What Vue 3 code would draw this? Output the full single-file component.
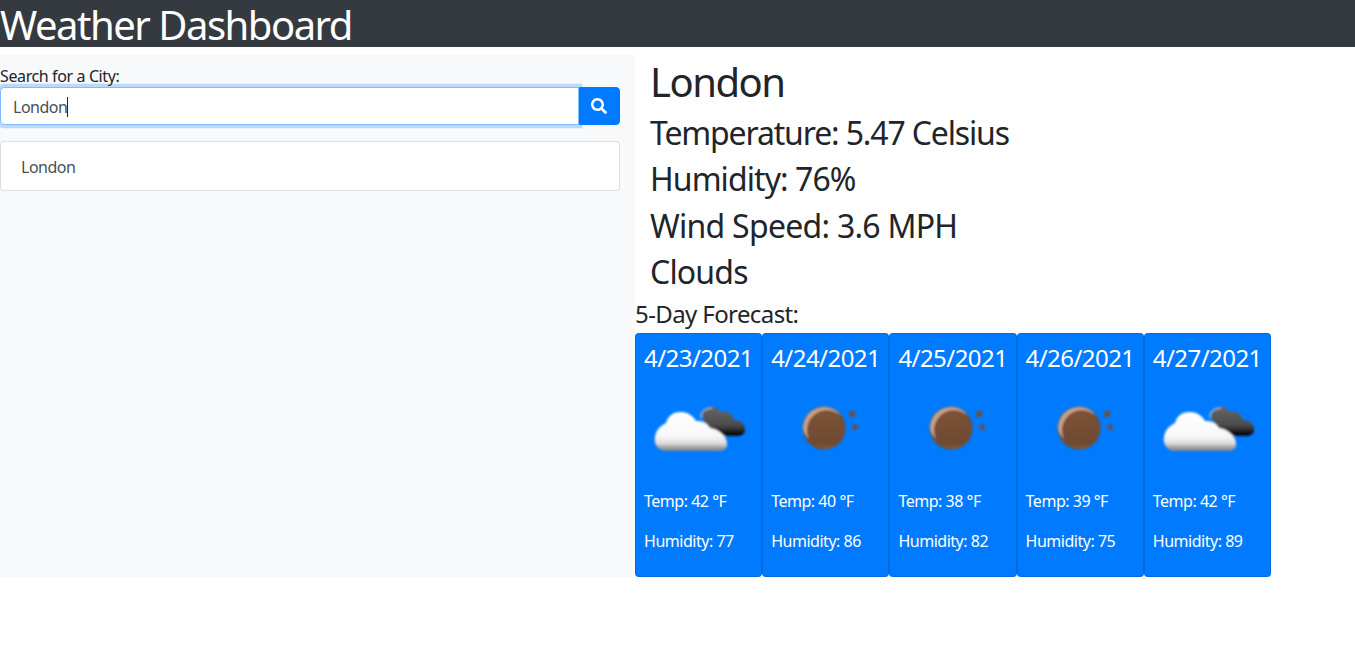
<script setup>
const days = [
  { date: '4/23/2021', icon: 'cloud', temp: 42, humidity: 77 },
  { date: '4/24/2021', icon: 'moon', temp: 40, humidity: 86 },
  { date: '4/25/2021', icon: 'moon', temp: 38, humidity: 82 },
  { date: '4/26/2021', icon: 'moon', temp: 39, humidity: 75 },
  { date: '4/27/2021', icon: 'cloud', temp: 42, humidity: 89 }
]
</script>

<template>
  <div class="page">
    <header class="topbar"><h1>Weather Dashboard</h1></header>
    <main class="layout">
      <section class="sidebar">
        <label class="search-label">Search for a City:</label>
        <div class="input-group">
          <div class="search-input"><span>London</span><i class="caret"></i></div>
          <button class="search-btn" aria-label="Search">
            <svg viewBox="0 0 512 512" width="16" height="16"><path fill="#fff" d="M505 442.7L405.3 343c-4.5-4.5-10.6-7-17-7H372c27.6-35.3 44-79.7 44-128C416 93.1 322.9 0 208 0S0 93.1 0 208s93.1 208 208 208c48.3 0 92.7-16.4 128-44v16.3c0 6.4 2.5 12.5 7 17l99.7 99.7c9.4 9.4 24.6 9.4 33.9 0l28.3-28.3c9.4-9.4 9.4-24.6.1-34zM208 336c-70.7 0-128-57.2-128-128 0-70.7 57.2-128 128-128 70.7 0 128 57.2 128 128 0 70.7-57.2 128-128 128z"/></svg>
          </button>
        </div>
        <ul class="history"><li>London</li></ul>
      </section>
      <section class="content">
        <div class="current">
          <h2>London</h2>
          <h3 class="temp">Temperature: 5.47 Celsius</h3>
          <h3 class="hum">Humidity: 76%</h3>
          <h3 class="wind">Wind Speed: 3.6 MPH</h3>
          <h3 class="sky">Clouds</h3>
        </div>
        <div class="forecast-title">5-Day Forecast:</div>
        <div class="forecast">
          <article v-for="d in days" :key="d.date" class="card">
            <div class="date">{{ d.date }}</div>
            <svg class="icon" viewBox="0 0 109 109">
              <defs>
                <linearGradient :id="'w' + d.date" gradientUnits="userSpaceOnUse" x1="0" y1="33" x2="0" y2="73">
                  <stop offset="0" stop-color="#fff" />
                  <stop offset=".6" stop-color="#f8f8f8" />
                  <stop offset=".78" stop-color="#dcdcdc" />
                  <stop offset=".9" stop-color="#9a9a9a" />
                  <stop offset="1" stop-color="#6f7f8f" />
                </linearGradient>
                <linearGradient :id="'k' + d.date" gradientUnits="userSpaceOnUse" x1="0" y1="28" x2="0" y2="58">
                  <stop offset="0" stop-color="#666" />
                  <stop offset=".6" stop-color="#4c4c4c" />
                  <stop offset=".88" stop-color="#111" />
                  <stop offset="1" stop-color="#000" />
                </linearGradient>
                <linearGradient :id="'m' + d.date" x1="0" y1="0" x2="0" y2="1">
                  <stop offset="0" stop-color="#7d5338" />
                  <stop offset=".85" stop-color="#6e4a32" />
                  <stop offset="1" stop-color="#80593f" />
                </linearGradient>
                <filter :id="'b' + d.date" x="-10%" y="-10%" width="120%" height="120%">
                  <feGaussianBlur stdDeviation=".9" />
                </filter>
              </defs>
              <g v-if="d.icon === 'cloud'" :filter="`url(#b${d.date})`">
                <path :fill="`url(#k${d.date})`" d="M60 42C56 34 62 28 68 28C72 28 75 30 77 33C82 31 88 34 90 41C96 41 101 45 101 50C101 55 97 57 93 57L66 57Z" />
                <path d="M57 39C56 33 61 29 68 29" fill="none" stroke="#b0b0b0" stroke-width="1.5" />
                <path :fill="`url(#w${d.date})`" d="M22 72C12 72 10 62 11 58C12 50 18 46 22 44C24 36 30 33 37 33C44 33 49 37 52 42C58 41 63 44 66 49C74 50 83 57 83 65C83 70 79 72 76 72Z" />
              </g>
              <g v-else :filter="`url(#b${d.date})`">
                <circle cx="53" cy="49" r="21.5" fill="#6f4c35" />
                <path d="M32 50A21 21 0 0 1 53 28A21 21 0 0 1 70 37A20 20 0 0 0 38 60A20 20 0 0 1 32 50Z" fill="#c8a084" />
                <circle cx="55" cy="51" r="18.5" :fill="`url(#m${d.date})`" />
                <circle cx="81" cy="35" r="3.2" fill="#6f4f3e" />
                <circle cx="84" cy="48" r="2.8" fill="#6f4f3e" />
              </g>
            </svg>
            <p>Temp: {{ d.temp }} °F</p>
            <p>Humidity: {{ d.humidity }}</p>
          </article>
        </div>
      </section>
    </main>
  </div>
</template>

<style>
html, body { background: #fff; }
</style>

<style scoped>
.page {
  font-family: "Noto Sans", "Open Sans", "Liberation Sans", sans-serif;
  color: #212529;
  font-size: 16px;
  line-height: 24px;
  letter-spacing: -.03em;
}
.topbar {
  box-sizing: border-box;
  background: #343a40;
  height: 47px;
  padding-top: 3px;
  margin-bottom: 8px;
}
h1 {
  margin: 0;
  font-size: 40px;
  line-height: 44px;
  font-weight: 400;
  color: #fff;
  letter-spacing: -.037em;
}
.layout { display: flex; align-items: stretch; }
.sidebar {
  box-sizing: border-box;
  width: 635px;
  flex: none;
  padding: 8px 15px 0 0;
  background: #f8f9fa;
}
.search-label { display: block; padding-top: 2px; line-height: 22px; letter-spacing: -.024em; }
.input-group { display: flex; height: 38px; }
.search-input {
  flex: 1;
  box-sizing: border-box;
  display: flex;
  align-items: center;
  padding: 1px 12px 0;
  background: #fff;
  color: #495057;
  border: 1px solid #80bdff;
  border-radius: 4px 0 0 4px;
  box-shadow: 0 0 0 3.2px rgba(0, 123, 255, .25);
}
.caret { width: 1px; height: 20px; background: #212529; }
.search-btn {
  width: 41px;
  border: 1px solid #007bff;
  border-radius: 0 4px 4px 0;
  background: #007bff;
  padding: 0 2px 0 0;
  display: flex;
  align-items: center;
  justify-content: center;
}
.history { list-style: none; margin: 16px 0 0; padding: 0; }
.history li {
  padding: 13px 20px 11px;
  background: #fff;
  color: #495057;
  border: 1px solid rgba(0, 0, 0, .125);
  border-radius: 4px;
}
.content { flex: none; width: 636px; }
.current { padding: 3px 0 0 15px; }
h2, h3 { margin: 0 0 8px; font-weight: 400; }
h2 { font-size: 40px; line-height: 48px; letter-spacing: -.037em; }
h3 { font-size: 32px; line-height: 38.4px; }
.temp { letter-spacing: -.036em; }
.hum { letter-spacing: -.029em; }
.wind { letter-spacing: -.023em; }
.sky { letter-spacing: -.026em; }
.forecast-title { font-size: 24px; line-height: 27px; margin-bottom: 6.6px; letter-spacing: -.025em; }
.forecast { display: flex; }
.card {
  box-sizing: border-box;
  width: 127.2px;
  padding: 8px;
  background: #007bff;
  color: #fff;
  border: 1px solid rgba(0, 0, 0, .125);
  border-radius: 4px;
}
.date { font-size: 24px; line-height: 28.8px; padding-top: 2px; margin-bottom: 6px; white-space: nowrap; letter-spacing: -.023em; }
.icon { display: block; width: 109.2px; height: 109.2px; }
.card p { margin: 0 0 16px; padding-top: 2px; line-height: 22px; }
</style>
